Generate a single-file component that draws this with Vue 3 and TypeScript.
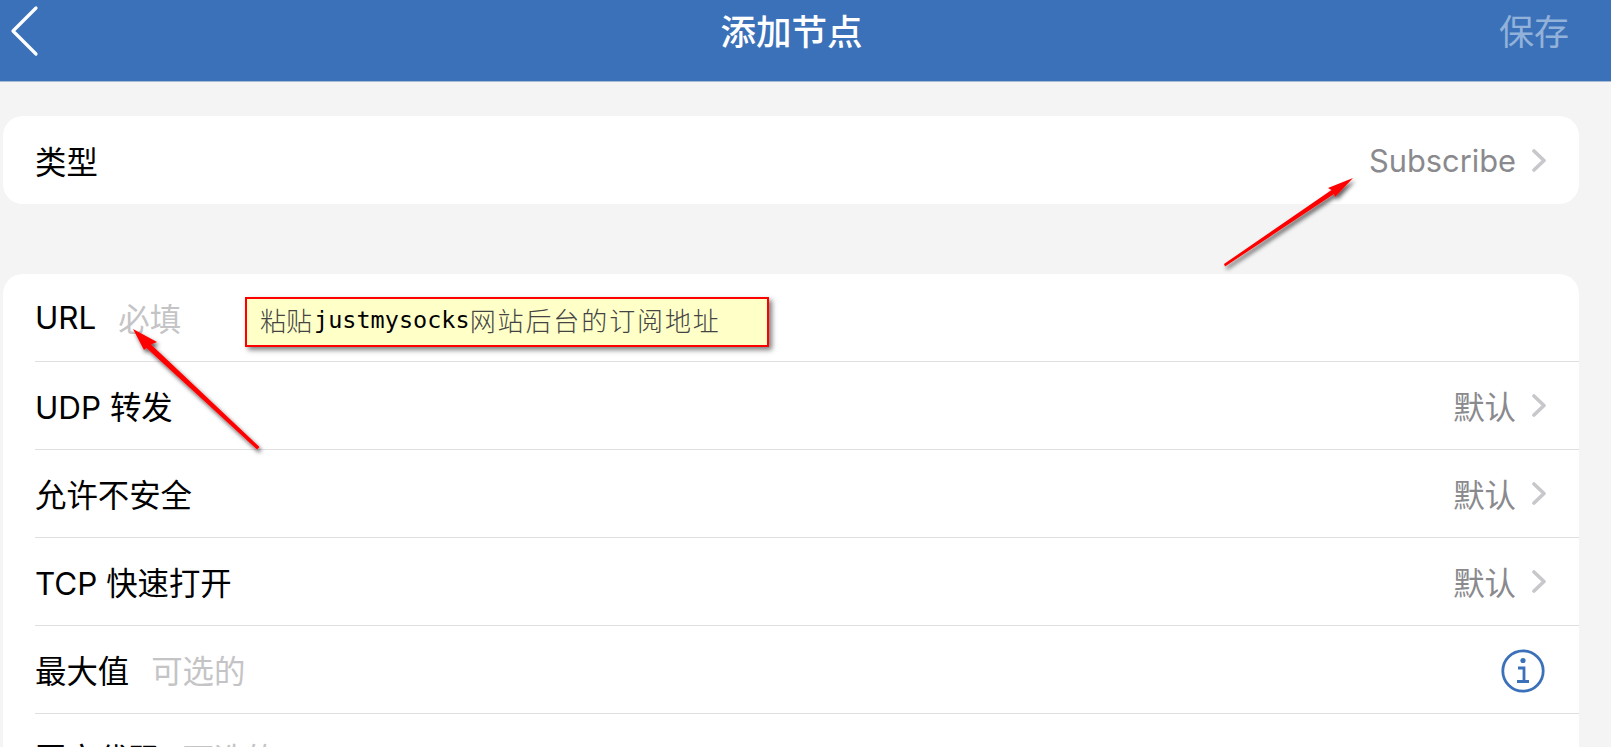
<script setup lang="ts">
interface Row {
  label: string;
  hint?: string;
  value?: string;
  info?: boolean;
}

const rows: Row[] = [
  { label: 'URL', hint: '必填' },
  { label: 'UDP 转发', value: '默认' },
  { label: '允许不安全', value: '默认' },
  { label: 'TCP 快速打开', value: '默认' },
  { label: '最大值', hint: '可选的', info: true },
  { label: '国家代码', hint: '可选的' },
];
</script>

<template>
  <div class="page">
    <header class="nav">
      <svg class="back" width="30" height="54" viewBox="0 0 30 54">
        <path d="M26 3 L3 26 L26 49" fill="none" stroke="#fff" stroke-width="3.2" stroke-linecap="round" stroke-linejoin="round" />
      </svg>
      <h1 class="title">添加节点</h1>
      <span class="save">保存</span>
    </header>

    <section class="card first">
      <div class="row">
        <span class="label">类型</span>
        <span class="value latin">Subscribe</span>
        <svg class="chev" width="14" height="23" viewBox="0 0 14 23">
          <path d="M2 2 L12 11.5 L2 21" fill="none" stroke="#c7c7cc" stroke-width="3.6" stroke-linecap="round" stroke-linejoin="round" />
        </svg>
      </div>
    </section>

    <section class="card second">
      <div v-for="row in rows" :key="row.label" class="row">
        <span class="label">{{ row.label }}</span>
        <span v-if="row.hint" class="hint">{{ row.hint }}</span>
        <template v-if="row.value">
          <span class="value">{{ row.value }}</span>
          <svg class="chev" width="14" height="23" viewBox="0 0 14 23">
            <path d="M2 2 L12 11.5 L2 21" fill="none" stroke="#c7c7cc" stroke-width="3.6" stroke-linecap="round" stroke-linejoin="round" />
          </svg>
        </template>
        <svg v-if="row.info" class="info" width="44" height="44" viewBox="0 0 44 44">
          <circle cx="22" cy="22" r="20.2" fill="none" stroke="#3b71b8" stroke-width="2.8" />
          <circle cx="22" cy="11.5" r="2.6" fill="#3b71b8" />
          <path d="M17 19 H23 V32.5 M16 32.5 H28" fill="none" stroke="#3b71b8" stroke-width="2.8" />
        </svg>
      </div>
    </section>

    <div class="note">粘贴<span class="mono">justmysocks</span><span class="tail">网站后台的订阅地址</span></div>

    <svg class="arrows" width="1611" height="747" viewBox="0 0 1611 747">
      <defs>
        <filter id="arrow-shadow" x="-20%" y="-20%" width="140%" height="140%">
          <feDropShadow dx="2" dy="3" stdDeviation="2" flood-color="#000" flood-opacity="0.65" />
        </filter>
      </defs>
      <g fill="#f00" filter="url(#arrow-shadow)">
        <polygon points="1353,178 1328,188 1331.5,190 1224,264 1225,266.5 1334,194 1335,197" />
        <polygon points="133,329 157,342 151,344.5 259.5,447 257,449.5 146.5,348 144,350" />
      </g>
    </svg>
  </div>
</template>

<style>
html,
body {
  margin: 0;
  background: #f4f4f4;
  overflow: hidden;
}
</style>

<style scoped>
.page {
  position: relative;
  width: 1611px;
  height: 747px;
  overflow: hidden;
  background: #f4f4f4;
  font-family: Inter, "Noto Sans CJK SC", sans-serif;
}
.nav {
  position: relative;
  display: flex;
  align-items: center;
  justify-content: center;
  box-sizing: border-box;
  height: 82px;
  padding: 0 28px 22px 0;
  background: #3b71b8;
  border-bottom: 1px solid #a9bcd6;
}
.back {
  position: absolute;
  left: 10px;
  top: 5px;
}
.title {
  margin: 0;
  font-size: 35.5px;
  font-weight: 500;
  color: #fff;
}
.save {
  position: absolute;
  right: 42px;
  top: 4px;
  font-size: 35px;
  color: #93b2da;
}
.card {
  margin: 0 32px 0 3px;
  background: #fff;
  border-radius: 20px;
  overflow: hidden;
}
.first {
  margin-top: 34px;
}
.second {
  margin-top: 70px;
}
.row {
  position: relative;
  display: flex;
  align-items: center;
  box-sizing: border-box;
  height: 88px;
  margin-left: 32px;
  padding-right: 33px;
  border-bottom: 1px solid #e0e0e0;
  font-size: 31.4px;
  color: #000;
}
.first .row {
  border-bottom: 0;
}
.hint {
  margin-left: 22px;
  color: #c4c4c6;
}
.value {
  margin-left: auto;
  color: #8a8a8e;
}
.latin {
  font-size: 30.8px;
}
.chev {
  margin-left: 16px;
}
.info {
  margin: 2px 1px 0 auto;
}
.note {
  position: absolute;
  left: 245px;
  top: 297px;
  box-sizing: border-box;
  width: 524px;
  height: 50px;
  padding: 0 13px 5px;
  display: flex;
  align-items: center;
  background: #ffffc8;
  border: 2px solid #f00;
  box-shadow: 3px 3px 5px rgba(0, 0, 0, 0.5);
  font-family: "Noto Sans CJK SC", sans-serif;
  font-size: 26px;
  font-weight: 300;
  color: #444;
  white-space: pre;
}
.mono {
  margin-left: 2px;
  font-family: "DejaVu Sans Mono", monospace;
  font-weight: 400;
  color: #000;
  font-size: 23.5px;
}
.tail {
  letter-spacing: 1.9px;
}
.arrows {
  position: absolute;
  left: 0;
  top: 0;
  pointer-events: none;
}
</style>
